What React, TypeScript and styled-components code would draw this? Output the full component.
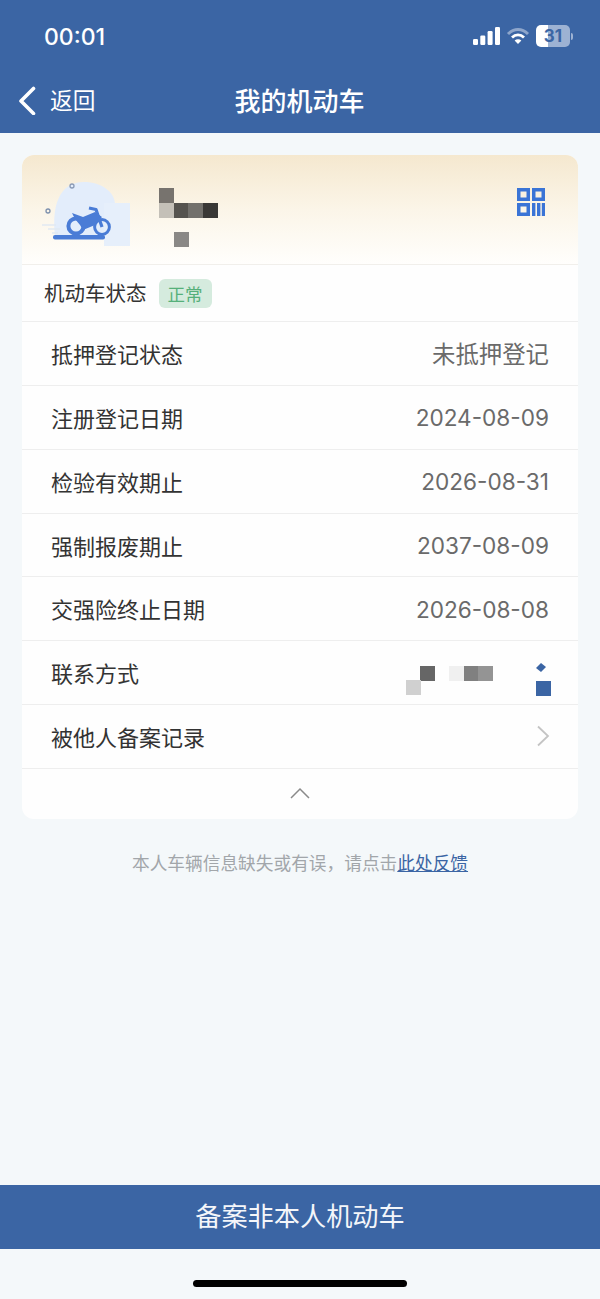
import React from 'react';
import styled, { createGlobalStyle } from 'styled-components';

const GlobalStyle = createGlobalStyle`
  html, body {
    margin: 0;
    padding: 0;
    background: #f4f8fa;
  }
  * {
    box-sizing: border-box;
  }
`;

const Page = styled.div`
  width: 600px;
  height: 1299px;
  display: flex;
  flex-direction: column;
  background: #f4f8fa;
  font-family: 'Noto Sans CJK SC', 'Noto Sans', sans-serif;
  overflow: hidden;
`;

const Header = styled.header`
  height: 133px;
  flex: 0 0 133px;
  background: #3b65a4;
  color: #fff;
  display: flex;
  flex-direction: column;
`;

const StatusBar = styled.div`
  height: 72px;
  padding: 0 27px 0 44px;
  display: flex;
  align-items: center;
  justify-content: space-between;
`;

const Clock = styled.span`
  margin-top: 2px;
  font-family: Inter, 'Liberation Sans', sans-serif;
  font-size: 23px;
  font-weight: 500;
`;

const StatusIcons = styled.div`
  display: flex;
  align-items: center;
  gap: 6px;
`;

const Nav = styled.div`
  position: relative;
  height: 61px;
  padding-bottom: 6px;
  display: flex;
  align-items: center;
  justify-content: center;
`;

const BackLink = styled.div`
  position: absolute;
  left: 18px;
  top: 9px;
  display: flex;
  align-items: center;
  gap: 14px;
  font-size: 22.7px;
  line-height: 38px;
`;

const Title = styled.h1`
  margin: 0 0 0 -1px;
  font-size: 26px;
  font-weight: 500;
  line-height: 40px;
`;

const Main = styled.main`
  flex: 1;
  padding: 22px 22px 0;
`;

const Card = styled.section`
  background: #fefefe;
  border-radius: 12px;
  overflow: hidden;
`;

const Banner = styled.div`
  height: 110px;
  padding: 23px 33px 0 20px;
  display: flex;
  justify-content: space-between;
  align-items: flex-start;
  background: linear-gradient(180deg, #f5e8cf 0%, #fbf5e8 50%, #fffefc 100%);
  border-bottom: 1px solid #f1efeb;
`;

const VehicleInfo = styled.div`
  display: flex;
  align-items: flex-start;
  gap: 29px;
`;

const QrButton = styled.div`
  margin-top: 10px;
  line-height: 0;
`;

const StateRow = styled.div`
  height: 57px;
  padding: 0 0 3px 22px;
  display: flex;
  align-items: center;
  gap: 12px;
  border-bottom: 1px solid #eeeeee;
  color: #333;
  font-size: 20.5px;
`;

const Badge = styled.span`
  width: 53px;
  height: 29px;
  margin-top: 3px;
  border-radius: 6px;
  background: #d5ebde;
  color: #55b07a;
  font-size: 17.5px;
  display: flex;
  align-items: center;
  justify-content: center;
`;

const Row = styled.div`
  height: 63.86px;
  padding: 0 29px 1px;
  display: flex;
  align-items: center;
  justify-content: space-between;
  border-bottom: 1px solid #eeeeee;
`;

const Label = styled.span`
  font-size: 22px;
  color: #333;
`;

const Value = styled.span<{ $text?: boolean }>`
  margin-top: ${({ $text }) => ($text ? 0 : 2)}px;
  font-size: ${({ $text }) => ($text ? 23.4 : 22.6)}px;
  color: #6a6a6a;
  font-family: Inter, 'Noto Sans CJK SC', sans-serif;
`;

const Collapse = styled.div`
  height: 50px;
  display: flex;
  justify-content: center;
  padding-top: 18px;
  line-height: 0;
`;

const Notice = styled.p`
  margin: 30px 0 0;
  text-align: center;
  font-size: 17.7px;
  line-height: 26px;
  color: #a2a6aa;
`;

const NoticeLink = styled.span`
  color: #3b65a4;
  text-decoration: underline;
`;

const ActionBar = styled.div`
  flex: 0 0 64px;
  height: 64px;
  padding-bottom: 4px;
  background: #3b65a4;
  color: #f4f6fa;
  font-size: 26.2px;
  display: flex;
  align-items: center;
  justify-content: center;
`;

const HomeArea = styled.div`
  flex: 0 0 50px;
  display: flex;
  justify-content: center;
  padding-top: 31px;
`;

const HomeBar = styled.div`
  width: 214px;
  height: 7px;
  border-radius: 4px;
  background: #000;
`;

const Battery = styled.div`
  width: 34px;
  height: 22px;
  border-radius: 5px;
  background: linear-gradient(90deg, #fff 0 34%, #9db2d3 34% 100%);
  color: #3b65a4;
  font-family: Inter, 'Liberation Sans', sans-serif;
  font-size: 17px;
  font-weight: 700;
  line-height: 22px;
  text-align: center;
`;

const BatteryWrap = styled.div`
  display: flex;
  align-items: center;
  gap: 1px;
`;

const BatteryTip = styled.div`
  width: 2px;
  height: 7px;
  border-radius: 0 2px 2px 0;
  background: #9db2d3;
`;

const PlateMask = styled.div`
  margin-top: 10px;
  line-height: 0;
`;

type Cell = [number, number, string];

const Mosaic: React.FC<{ cells: Cell[]; width: number; height: number }> = ({ cells, width, height }) => (
  <svg width={width} height={height} viewBox={`0 0 ${width} ${height}`}>
    {cells.map(([x, y, fill]) => (
      <rect key={`${x}-${y}`} x={x} y={y} width={15} height={15} fill={fill} />
    ))}
  </svg>
);

const plateCells: Cell[] = [
  [0, 0, '#77736e'],
  [0, 15, '#c4c0b8'],
  [15, 15, '#55534f'],
  [29, 15, '#72706c'],
  [44, 15, '#393836'],
  [15, 44, '#8a8886'],
];

const contactCells: Cell[] = [
  [14, 0, '#666666'],
  [0, 14, '#d0d0d0'],
  [43, 0, '#f0f0f0'],
  [58, 0, '#808080'],
  [72, 0, '#949494'],
];

const Signal = () => (
  <svg width="27" height="18" viewBox="0 0 27 18" fill="#fff">
    <rect x="0" y="12" width="5" height="6" rx="1.2" />
    <rect x="7.3" y="8.5" width="5" height="9.5" rx="1.2" />
    <rect x="14.6" y="4" width="5" height="14" rx="1.2" />
    <rect x="22" y="0" width="5" height="18" rx="1.2" />
  </svg>
);

const Wifi = () => (
  <svg width="24" height="18" viewBox="0 0 24 18" fill="none">
    <path d="M2 7 C8 1 16 1 22 7" stroke="#8ea6cb" strokeWidth="3" />
    <path d="M6 10.5 C9.5 7 14.5 7 18 10.5" stroke="#fff" strokeWidth="2.8" />
    <path d="M12 17 L8.6 13.4 C10.6 11.8 13.4 11.8 15.4 13.4 Z" fill="#fff" />
  </svg>
);

const BackArrow = () => (
  <svg width="18" height="30" viewBox="0 0 18 30" fill="none">
    <path d="M15.5 3.5 L3 16 L15.5 28.5" stroke="#fff" strokeWidth="3.6" strokeLinecap="round" strokeLinejoin="round" />
  </svg>
);

const MotoIllustration = () => (
  <svg width="88" height="68" viewBox="0 0 88 68">
    <path d="M13 57 C10 30 16 4 42 4 C60 4 72 14 73 25 L62 25 L62 57 Z" fill="#e3edfb" />
    <rect x="62" y="25" width="26" height="43" fill="#e6effb" />
    <circle cx="30" cy="8" r="2" fill="none" stroke="#8a9ab5" strokeWidth="1.3" />
    <circle cx="6" cy="33" r="2" fill="none" stroke="#7d90ad" strokeWidth="1.3" />
    <path d="M0 47 H14 M6 51 H18 M10 55 H16" stroke="#e1e9f2" strokeWidth="1.6" />
    <rect x="11" y="57" width="52" height="4.5" rx="2" fill="#4a7cd6" />
    <circle cx="34" cy="48" r="7.6" fill="none" stroke="#4a7cd6" strokeWidth="4" />
    <circle cx="60" cy="49" r="7.4" fill="none" stroke="#4a7cd6" strokeWidth="3" />
    <path d="M30 35 L41 39 L53 34 L60 39 L53 47 L41 52 L38 47 L33 41 Z" fill="#4a7cd6" />
    <path d="M47 30 L54 31.5 L60 49" fill="none" stroke="#4a7cd6" strokeWidth="3.2" strokeLinejoin="round" />
  </svg>
);

const QrIcon = () => (
  <svg width="28" height="28" viewBox="0 0 28 28" fill="#3a74d6">
    <path fillRule="evenodd" d="M0 0H13V13H0ZM3.5 3.5V9.5H9.5V3.5Z" />
    <path fillRule="evenodd" d="M15 0H28V13H15ZM18.5 3.5V9.5H24.5V3.5Z" />
    <path fillRule="evenodd" d="M0 15H13V28H0ZM3.5 18.5V24.5H9.5V18.5Z" />
    <rect x="15" y="15" width="3.4" height="13" />
    <rect x="20" y="15" width="3.4" height="13" />
    <rect x="24.8" y="15" width="3.2" height="13" />
  </svg>
);

const ContactMask = () => (
  <svg width="146" height="40" viewBox="0 0 146 40">
    <path d="M130 6 L135 1 L140 5 L135 10 Z" fill="#3b65a4" />
    <rect x="130" y="19" width="15" height="15" fill="#3b65a4" />
  </svg>
);

const rows = [
  { label: '抵押登记状态', value: '未抵押登记', text: true },
  { label: '注册登记日期', value: '2024-08-09' },
  { label: '检验有效期止', value: '2026-08-31' },
  { label: '强制报废期止', value: '2037-08-09' },
  { label: '交强险终止日期', value: '2026-08-08' },
];

const ContactValue = styled.div`
  position: relative;
  width: 146px;
  height: 40px;
  margin: 19px -3px 0 0;
  line-height: 0;
`;

const ContactCells = styled.div`
  position: absolute;
  left: 0;
  top: 4px;
`;

const ChevronSlot = styled.span`
  margin-right: -1px;
  line-height: 0;
`;

const App: React.FC = () => (
  <Page>
    <GlobalStyle />
    <Header>
      <StatusBar>
        <Clock>00:01</Clock>
        <StatusIcons>
          <Signal />
          <Wifi />
          <BatteryWrap>
            <Battery>31</Battery>
            <BatteryTip />
          </BatteryWrap>
        </StatusIcons>
      </StatusBar>
      <Nav>
        <BackLink>
          <BackArrow />
          返回
        </BackLink>
        <Title>我的机动车</Title>
      </Nav>
    </Header>
    <Main>
      <Card>
        <Banner>
          <VehicleInfo>
            <MotoIllustration />
            <PlateMask>
              <Mosaic cells={plateCells} width={59} height={59} />
            </PlateMask>
          </VehicleInfo>
          <QrButton>
            <QrIcon />
          </QrButton>
        </Banner>
        <StateRow>
          机动车状态
          <Badge>正常</Badge>
        </StateRow>
        {rows.map(r => (
          <Row key={r.label}>
            <Label>{r.label}</Label>
            <Value $text={r.text}>{r.value}</Value>
          </Row>
        ))}
        <Row>
          <Label>联系方式</Label>
          <ContactValue>
            <ContactMask />
            <ContactCells>
              <Mosaic cells={contactCells} width={90} height={30} />
            </ContactCells>
          </ContactValue>
        </Row>
        <Row>
          <Label>被他人备案记录</Label>
          <ChevronSlot>
            <svg width="14" height="22" viewBox="0 0 14 22" fill="none">
              <path d="M2 1.5 L12 11 L2 20.5" stroke="#c4c4c4" strokeWidth="1.8" />
            </svg>
          </ChevronSlot>
        </Row>
        <Collapse>
          <svg width="20" height="12" viewBox="0 0 20 12" fill="none">
            <path d="M1 11 L10 2 L19 11" stroke="#8a8a8a" strokeWidth="1.5" />
          </svg>
        </Collapse>
      </Card>
      <Notice>
        本人车辆信息缺失或有误，请点击<NoticeLink>此处反馈</NoticeLink>
      </Notice>
    </Main>
    <ActionBar>备案非本人机动车</ActionBar>
    <HomeArea>
      <HomeBar />
    </HomeArea>
  </Page>
);

export default App;
